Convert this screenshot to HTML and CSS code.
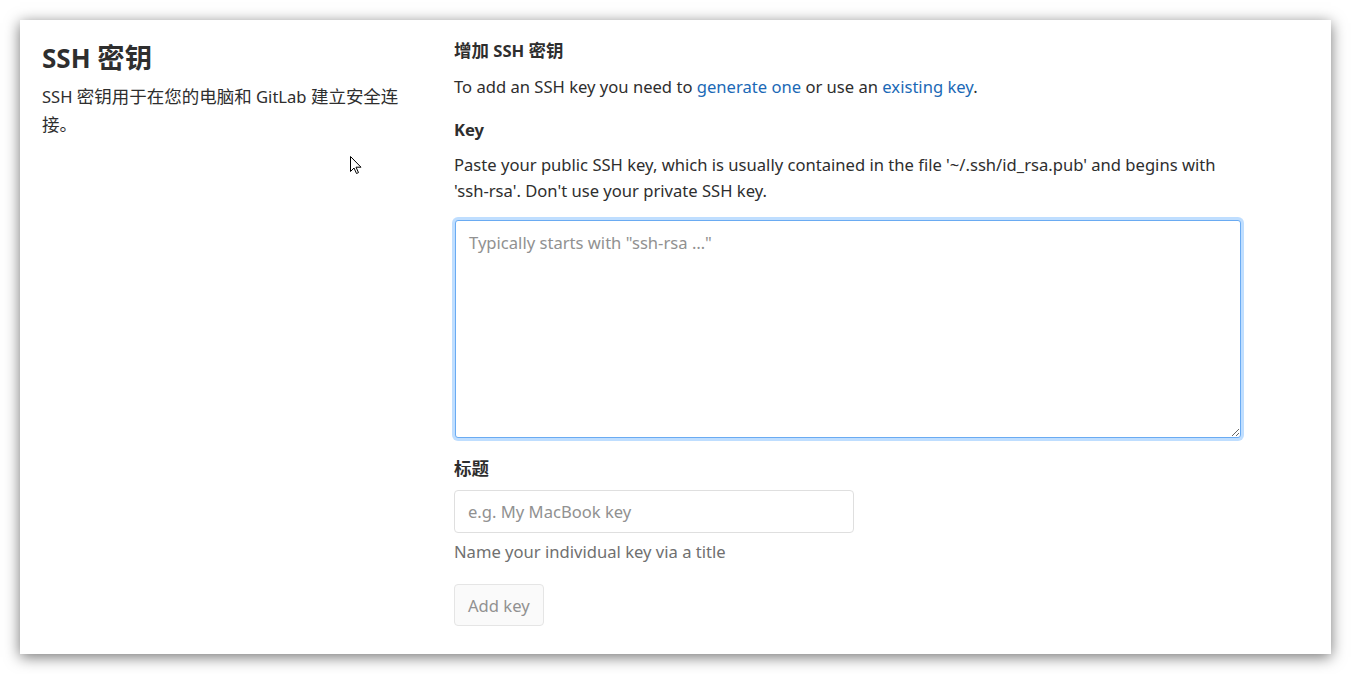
FILE: index.html
```html
<!DOCTYPE html>
<html lang="zh">
<head>
<meta charset="utf-8">
<title>SSH 密钥</title>
<link rel="stylesheet" href="styles.css">
</head>
<body>
<div class="card">
  <div class="row">
    <div class="col-left">
      <h3 class="page-title">SSH <span class="cjk">密钥</span></h3>
      <p class="lead">SSH <span class="cjk">密钥用于在您的电脑和</span> GitLab <span class="cjk">建立安全连</span><span class="cjk">接。</span></p>
    </div>
    <div class="col-right">
      <h4 class="section-title"><span class="cjk">增加</span> SSH <span class="cjk">密钥</span></h4>
      <p class="intro">To add an SSH key you need to <a href="#">generate one</a> or use an <a href="#">existing key</a>.</p>
      <form class="form">
        <label class="label" for="key">Key</label>
        <p class="hint">Paste your public SSH key, which is usually contained in the file '~/.ssh/id_rsa.pub' and begins with 'ssh-rsa'. Don't use your private SSH key.</p>
        <textarea id="key" class="textarea focused" placeholder="Typically starts with &quot;ssh-rsa …&quot;"></textarea>
        <label class="label label-title" for="title"><span class="cjk">标题</span></label>
        <input id="title" class="input" type="text" placeholder="e.g. My MacBook key">
        <p class="help">Name your individual key via a title</p>
        <button type="button" class="btn" disabled>Add key</button>
      </form>
    </div>
  </div>
  <svg class="cursor" width="13" height="20" viewBox="0 0 13 20" aria-hidden="true">
    <path d="M0.5 0.5 L0.5 15.5 L4 12 L6.5 17.5 L8.5 16.6 L6 11.2 L11 11.2 Z" fill="#fff" stroke="#000" stroke-width="1" stroke-linejoin="miter"/>
  </svg>
</div>
</body>
</html>
```

FILE: styles.css
```css
* { box-sizing: border-box; }

html, body {
  margin: 0;
  padding: 0;
  background: #ffffff;
}

body {
  padding: 20px;
  font-family: "Noto Sans", "Noto Sans CJK SC", sans-serif;
  font-size: 16.6px;
  color: #2e2e2e;
}

.cjk {
  font-family: "Noto Sans CJK SC", "Noto Sans", sans-serif;
  font-size: 1.054em;
}

.card {
  position: relative;
  width: 1311px;
  height: 634px;
  background: #ffffff;
  box-shadow: 0 3px 14px rgba(0, 0, 0, 0.55);
  padding: 18px 0 0 22px;
}

.row {
  display: flex;
  align-items: flex-start;
}

.col-left {
  width: 366px;
  margin-right: 46px;
}

.col-right {
  width: 792px;
}

.page-title {
  margin: 2px 0 0 0;
  font-size: 26px;
  line-height: 32px;
  font-weight: 700;
  color: #2e2e2e;
}

.lead {
  margin: 8px 0 0 0;
  line-height: 27px;
}

.section-title {
  margin: 0;
  font-size: 16.6px;
  line-height: 24px;
  font-weight: 700;
}

.intro {
  margin: 12px 0 0 0;
  line-height: 24px;
}

.intro a {
  color: #1b69b6;
  text-decoration: none;
}

.form {
  display: flex;
  flex-direction: column;
  align-items: flex-start;
  margin-top: 19px;
}

.label {
  font-weight: 700;
  line-height: 24px;
}

.hint {
  margin: 10px 0 0 0;
  line-height: 26px;
}

.textarea {
  margin: 16px 0 0 1px;
  width: 786px;
  height: 218px;
  padding: 10px 13px;
  font-family: inherit;
  font-size: 16.6px;
  line-height: 24px;
  color: #2e2e2e;
  border: 1px solid #6aabf2;
  border-radius: 3px;
  box-shadow: 0 0 0 3px rgba(128, 189, 255, 0.5);
  outline: none;
  resize: vertical;
}

.textarea::placeholder,
.input::placeholder {
  color: #919191;
}

.label-title {
  margin-top: 18px;
}

.input {
  margin-top: 9px;
  width: 400px;
  height: 43px;
  padding: 6px 13px;
  font-family: inherit;
  font-size: 16.6px;
  color: #2e2e2e;
  border: 1px solid #dfdfdf;
  border-radius: 4px;
  outline: none;
}

.help {
  margin: 7px 0 0 0;
  line-height: 24px;
  color: #707070;
}

.btn {
  margin-top: 20px;
  height: 42px;
  padding: 0 13px;
  font-family: inherit;
  font-size: 16.6px;
  color: #919191;
  background: #fafafa;
  border: 1px solid #e5e5e5;
  border-radius: 4px;
}

.cursor {
  position: absolute;
  left: 330px;
  top: 136px;
}
```
